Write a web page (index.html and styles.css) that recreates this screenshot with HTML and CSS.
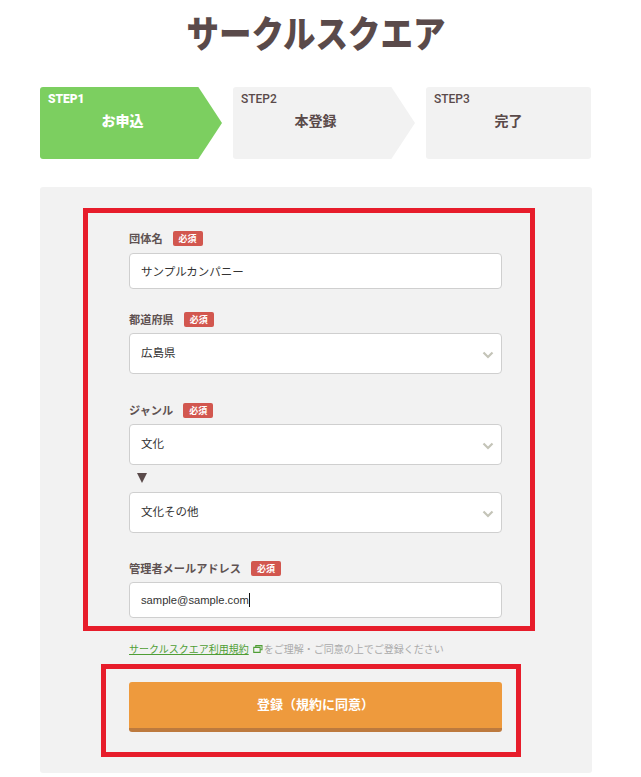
FILE: index.html
```html
<!DOCTYPE html>
<html lang="ja">
<head>
    <meta charset="UTF-8">
    <meta name="viewport" content="width=device-width, initial-scale=1.0">
    <title>サークルスクエア お申込</title>
    <link rel="stylesheet" href="styles.css">
</head>
<body>

    <h1 class="logo">サークルスクエア</h1>

    <ol class="steps">
        <li class="step step-arrow step-active">
            <span class="step-no">STEP1</span>
            <span class="step-name">お申込</span>
        </li>
        <li class="step step-arrow">
            <span class="step-no">STEP2</span>
            <span class="step-name">本登録</span>
        </li>
        <li class="step">
            <span class="step-no">STEP3</span>
            <span class="step-name">完了</span>
        </li>
    </ol>

    <form class="panel">
        <!-- Red annotation frame around the fields -->
        <div class="frame frame-fields">
            <div class="field field-name">
                <label class="field-label">団体名<span class="required">必須</span></label>
                <input type="text" class="text-input" value="サンプルカンパニー">
            </div>

            <div class="field field-pref">
                <label class="field-label">都道府県<span class="required">必須</span></label>
                <div class="select-wrap">
                    <select class="select-input"><option>広島県</option></select>
                    <svg class="chevron" viewBox="0 0 12 8"><path d="M1.5 1.5 6 6l4.5-4.5" fill="none" stroke="#c4c4b8" stroke-width="2.2"/></svg>
                </div>
            </div>

            <div class="field field-genre">
                <label class="field-label">ジャンル<span class="required">必須</span></label>
                <div class="select-wrap">
                    <select class="select-input"><option>文化</option></select>
                    <svg class="chevron" viewBox="0 0 12 8"><path d="M1.5 1.5 6 6l4.5-4.5" fill="none" stroke="#c4c4b8" stroke-width="2.2"/></svg>
                </div>
                <div class="down-mark"></div>
                <div class="select-wrap">
                    <select class="select-input"><option>文化その他</option></select>
                    <svg class="chevron" viewBox="0 0 12 8"><path d="M1.5 1.5 6 6l4.5-4.5" fill="none" stroke="#c4c4b8" stroke-width="2.2"/></svg>
                </div>
            </div>

            <div class="field field-mail">
                <label class="field-label">管理者メールアドレス<span class="required">必須</span></label>
                <div class="select-wrap">
                    <input type="text" class="text-input mail-input" value="sample@sample.com">
                    <span class="caret"></span>
                </div>
            </div>
        </div>

        <p class="terms">
            <a href="#" class="terms-link">サークルスクエア利用規約</a>
            <svg class="ext-icon" viewBox="0 0 11 9"><path d="M3 2.5V.7h7v4.6H8M.7 2.7h7.2v5.6H.7z" fill="none" stroke="#4f9e35" stroke-width="1.2"/></svg>
            をご理解・ご同意の上でご登録ください
        </p>

        <div class="frame frame-submit">
            <button type="button" class="submit-btn">登録（規約に同意）</button>
        </div>
    </form>

</body>
</html>
```

FILE: styles.css
```css
* {
    box-sizing: border-box;
}

body {
    margin: 0;
    padding: 0 49px 0 40px;
    background-color: #fff;
    color: #5a4a4a;
    font-family: "Noto Sans CJK JP", "Liberation Sans", sans-serif;
}

.logo {
    margin: 0;
    height: 87px;
    padding-top: 7px;
    text-align: center;
    font-size: 37px;
    line-height: 50px;
    font-weight: 900;
    color: #5a4a4a;
    transform: scaleX(0.878);
}

/* Steps */
.steps {
    display: flex;
    gap: 11px;
    height: 72px;
    margin: 0 0 28px;
    padding: 0;
    list-style: none;
}

.step {
    width: 165px;
    height: 72px;
    padding: 5px 8px;
    background: #f2f2f2;
    border-radius: 3px;
}

.step-arrow {
    width: 182px;
    padding-right: 25px;
    clip-path: polygon(0 0, 87% 0, 100% 50%, 87% 100%, 0 100%);
}

.step-active {
    background: #7ccf60;
    color: #fff;
}

.step-no {
    display: block;
    font-family: Roboto, "Liberation Sans", sans-serif;
    font-size: 12px;
    line-height: 14px;
    font-weight: 500;
}

.step-name {
    display: block;
    margin-top: 4px;
    text-align: center;
    font-size: 14px;
    line-height: 20px;
    font-weight: 700;
}

.step-active .step-no,
.step-active .step-name {
    font-weight: 900;
}

/* Form panel */
.panel {
    height: 586px;
    padding: 21px 0 0 43px;
    background: #f2f2f2;
    border-radius: 3px;
}

.frame {
    border: 5px solid #e71d2b;
}

.frame-fields {
    width: 452px;
    height: 423px;
    padding: 17px 28px 0 41px;
}

.field-name .field-label {
    margin-bottom: 7px;
}

.field-pref {
    margin-top: 22px;
}

.field-genre {
    margin-top: 28px;
}

.field-mail {
    margin-top: 27px;
}

.field-label {
    display: flex;
    align-items: center;
    height: 16px;
    margin-bottom: 6px;
    font-size: 11.2px;
    font-weight: 700;
    color: #5f5252;
}

.required {
    width: 30px;
    height: 15px;
    margin-left: 10px;
    background: #d2574f;
    border-radius: 2px;
    color: #fff;
    text-align: center;
    font-size: 9px;
    line-height: 15px;
    font-weight: 700;
}

.text-input,
.select-input {
    display: block;
    width: 373px;
    height: 36px;
    padding: 0 11px;
    background: #fff;
    border: 1px solid #cfcfcf;
    border-radius: 4px;
    color: #333;
    font-family: "Noto Sans CJK JP", "Liberation Sans", sans-serif;
    font-size: 11.5px;
    outline: none;
}

.mail-input {
    font-family: "Liberation Sans", sans-serif;
    font-size: 11.2px;
}

.select-input {
    height: 41px;
    padding-bottom: 3px;
    appearance: none;
}

.select-wrap {
    position: relative;
}

.chevron {
    position: absolute;
    top: 18px;
    right: 8px;
    width: 12px;
    height: 8px;
    pointer-events: none;
}

.caret {
    position: absolute;
    top: 11px;
    left: 120px;
    width: 1px;
    height: 14px;
    background: #111;
}

.down-mark {
    width: 0;
    height: 0;
    margin: 8px 0 9px 8px;
    border-top: 10px solid #5a4a4a;
    border-left: 5.5px solid transparent;
    border-right: 5.5px solid transparent;
}

.terms {
    display: flex;
    align-items: center;
    height: 14px;
    margin: 11px 0 0 46px;
    font-size: 10px;
    line-height: 14px;
    color: #aaa;
}

.terms-link {
    color: #4f9e35;
}

.ext-icon {
    width: 10px;
    height: 8px;
    margin: 0 1px 0 4px;
}

.frame-submit {
    width: 420px;
    height: 93px;
    margin: 8px 0 0 18px;
    padding: 13px 0 0 23px;
}

.submit-btn {
    display: block;
    width: 373px;
    height: 50px;
    padding: 0 0 4px;
    background: #ee9a3d;
    border: 0;
    border-bottom: 4px solid #bd7a3e;
    border-radius: 3px;
    color: #fff;
    font-family: "Noto Sans CJK JP", "Liberation Sans", sans-serif;
    font-size: 13px;
    font-weight: 700;
}
```
